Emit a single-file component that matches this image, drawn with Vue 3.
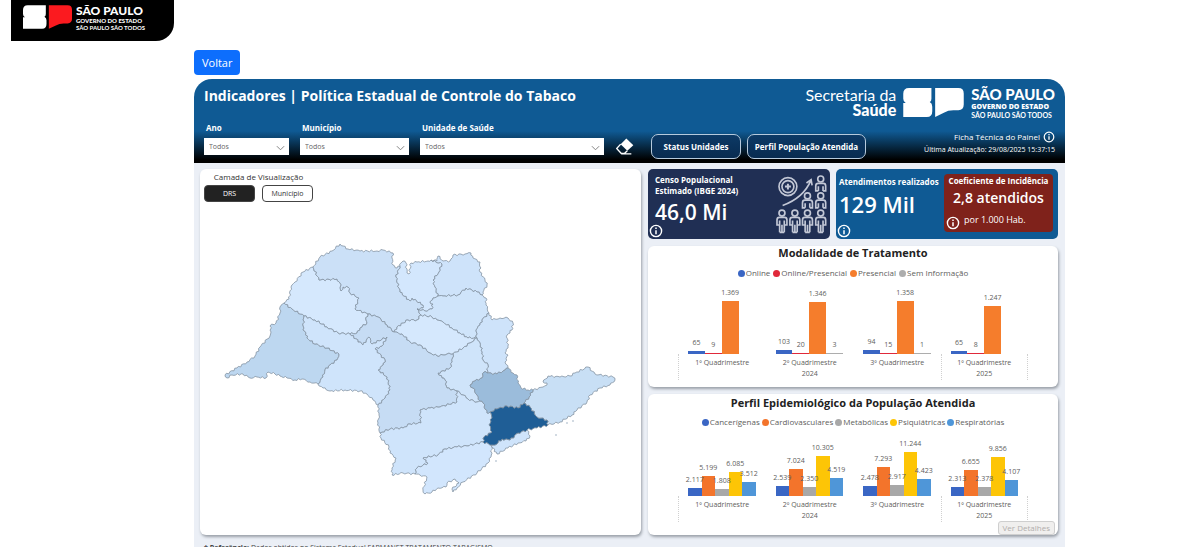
<script setup>
import { ref } from 'vue'

const layer = ref('drs')

const filters = [
  { id: 'ano', label: 'Ano', size: 'small' },
  { id: 'municipio', label: 'Município', size: 'medium' },
  { id: 'unidade', label: 'Unidade de Saúde', size: 'large' }
]

const periods = [
  { label: '1º Quadrimestre', year: '' },
  { label: '2º Quadrimestre', year: '2024' },
  { label: '3º Quadrimestre', year: '' },
  { label: '1º Quadrimestre', year: '2025' }
]

const charts = [
  {
    id: 'modalidade',
    title: 'Modalidade de Tratamento',
    peak: 53,
    max: 1369,
    series: [
      { name: 'Online', color: '#3a66c4' },
      { name: 'Online/Presencial', color: '#e0293a' },
      { name: 'Presencial', color: '#f57d2c' },
      { name: 'Sem Informação', color: '#adadad' }
    ],
    values: [
      [65, 9, 1369, null],
      [103, 20, 1346, 3],
      [94, 15, 1358, 1],
      [65, 8, 1247, null]
    ]
  },
  {
    id: 'perfil',
    title: 'Perfil Epidemiológico da População Atendida',
    peak: 44,
    max: 11244,
    series: [
      { name: 'Cancerígenas', color: '#3a66c4' },
      { name: 'Cardiovasculares', color: '#f3742b' },
      { name: 'Metabólicas', color: '#a8a8a8' },
      { name: 'Psiquiátricas', color: '#fdc506' },
      { name: 'Respiratórias', color: '#4f96d8' }
    ],
    values: [
      [2117, 5199, 1808, 6085, 3512],
      [2539, 7024, 2350, 10305, 4519],
      [2478, 7293, 2917, 11244, 4423],
      [2313, 6655, 2378, 9856, 4107]
    ]
  }
]

const format = (n) => String(n).replace(/\B(?=(\d{3})+$)/g, '.')
const barHeight = (chart, v) => Math.max(1, Math.round((v / chart.max) * chart.peak)) + 'px'

const arcs = {
  prudenteOut: '318,384 310,382 302,379 295,380 287,378 280,376 275,374 268,372 266,378 257,377 250,378 243,374 232,375 227,378 225,375 237,368 247,362 255,356 260,347 270,336 271,332 270,326 276,323 280,313 280,307 284,303',
  aracatubaOut: '284,303 289,299 291,287 295,282 303,272 313,267',
  rioPretoOut: '313,267 320,257 332,251 340,244 348,249 360,251 377,251 383,250 393,253 392,258 393,265 397,268 400,266',
  barretosOut: '400,266 401,263 403,261 406,263 407,273 409,274 411,263 417,262 428,261 431,260',
  francaOut: '431,260 437,261 438,256 443,261 450,261 453,255 465,254 471,253 473,258 480,262 480,272 485,280 487,285 483,292 482,295',
  barretosFranca: '431,260 442,264 439,272 433,280 435,287 438,296',
  barretosRibeirao: '438,296 433,298 430,302 433,304 432,309 425,311 417,309',
  barretosRioPreto: '400,266 396,277 400,292 410,301 412,298 423,305 423,308 417,309',
  ribeiraoRioPreto: '417,309 419,313 421,315',
  francaRibeirao: '438,296 443,296 458,295 466,288 477,292 482,295',
  ribeiraoOut: '482,295 486,298 486,305 489,313',
  saoJoaoOut: '489,313 492,320 500,318 508,318 513,323 512,330 507,335 508,348 505,353 508,355 505,362 508,368',
  ribeiraoSaoJoao: '489,313 482,320 480,325 476,330 477,338',
  ribeiraoAraraquara: '421,315 432,317 437,320 443,322 452,328 460,333 468,338 477,338',
  araraquaraRioPreto: '421,315 417,320 408,320 397,327 394,332',
  araraquaraBauru: '394,332 402,334 410,342 420,345 430,353 437,356 447,354 453,354',
  araraquaraPiracicaba: '453,354 463,348 470,343 477,338',
  saoJoaoPiracicaba: '477,338 480,343 482,352 483,360 488,365 487,373',
  saoJoaoCampinas: '487,373 497,374 505,370 508,368',
  piracicabaBauru: '453,354 452,362 450,368 438,373 442,378 445,380 447,388 457,391',
  piracicabaSorocaba: '457,391 463,395 468,399 477,402 480,401',
  piracicabaCampinas: '480,401 477,395 473,388 470,385 475,381 482,378 484,372 487,373',
  campinasOut: '508,368 513,373 517,375 518,383 521,388 528,390 533,390',
  campinasTaubate: '533,390 529,397 524,403',
  campinasCapital: '524,403 518,408 507,406 497,409 490,412',
  campinasSorocaba: '480,401 483,403 487,413 490,412',
  taubateOut: '533,390 543,387 547,385 547,383 543,382 548,376 560,377 570,376 575,373 588,367 595,374 613,377 615,380 610,385 600,388 590,395 587,402 577,410 572,415 560,422 548,425',
  taubateCapital: '524,403 530,407 537,417 547,420 548,425',
  capitalOut: '548,425 537,428 527,430',
  capitalSantos: '527,430 518,433 510,440 502,439 495,445 492,445',
  capitalSorocaba: '490,412 492,418 489,425 492,432 484,437 483,442',
  capitalRegistro: '483,442 492,445',
  santosOut: '527,430 530,436 526,441 518,443 508,448 497,454 493,448 492,445',
  registroOut: '492,445 491,457 488,463 477,473 463,482 457,488 453,492 452,489 459,483 455,479 447,483 446,487 438,488 432,492 425,494 423,490 427,477 420,475 415,474',
  registroSorocaba: '415,474 417,468 428,463 423,458 438,455 445,449 457,447 467,446 483,442',
  sorocabaOut: '415,474 403,473 392,475 392,468 396,458 390,453 389,447 381,438 380,433',
  sorocabaBauru: '380,433 390,429 403,428 410,424 421,423 420,410 430,408 440,407 457,402 457,391',
  aracatubaBauru: '368,314 366,320 367,323 360,328 357,333 350,334',
  bauruMarilia: '350,334 363,345 369,337 372,344 387,337 382,346 375,349 385,360 383,365 378,370 387,377 390,390 385,398 378,405',
  bauruOut: '378,405 379,415 378,423 380,433',
  mariliaOut: '318,384 323,388 330,391 345,390 360,391 367,394 373,400 378,405',
  prudenteMarilia: '318,384 323,377 325,370 330,365 337,360 339,354 327,348 315,344 307,338 306,333 303,330 304,316',
  prudenteAracatuba: '284,303 292,309 304,316',
  mariliaAracatuba: '304,316 315,320 327,327 338,333 350,334',
  aracatubaRioPreto: '313,267 319,280 337,279 340,283 341,291 343,287 348,287 350,293 359,298 355,309 368,314',
  rioPretoBauru: '368,314 378,317 387,325 394,332'
}

/* Breaks long border segments into short ones with a slight alternating sway. */
const detail = (text) => {
  const pts = text.split(' ').map((p) => p.split(',').map(Number))
  const out = [pts[0]]
  for (let i = 1; i < pts.length; i++) {
    const [ax, ay] = pts[i - 1]
    const [bx, by] = pts[i]
    const len = Math.hypot(bx - ax, by - ay)
    const steps = Math.max(1, Math.round(len / 2))
    for (let s = 1; s < steps; s++) {
      const t = s / steps
      const sway = Math.sin(ax * 3.1 + ay * 1.7 + s * 2.3)
      out.push([ax + (bx - ax) * t - ((by - ay) / len) * sway, ay + (by - ay) * t + ((bx - ax) / len) * sway])
    }
    out.push([bx, by])
  }
  return out
}

const ring = (names) => {
  const pts = names.flatMap((n) => (n[0] === '-' ? detail(arcs[n.slice(1)]).reverse() : detail(arcs[n])))
  return 'M' + pts.map((p) => p[0].toFixed(1) + ' ' + p[1].toFixed(1)).join('L') + 'Z'
}

const regions = [
  { name: 'Presidente Prudente', fill: '#bdd7f0', arcs: ['prudenteOut', 'prudenteAracatuba', '-prudenteMarilia'] },
  { name: 'Araçatuba', fill: '#d5e8fd', arcs: ['aracatubaOut', 'aracatubaRioPreto', 'aracatubaBauru', '-mariliaAracatuba', '-prudenteAracatuba'] },
  { name: 'São José do Rio Preto', fill: '#cbe0f7', arcs: ['rioPretoOut', 'barretosRioPreto', 'ribeiraoRioPreto', 'araraquaraRioPreto', '-rioPretoBauru', '-aracatubaRioPreto'] },
  { name: 'Barretos', fill: '#d3e7fd', arcs: ['barretosOut', 'barretosFranca', 'barretosRibeirao', '-barretosRioPreto'] },
  { name: 'Franca', fill: '#cee3fa', arcs: ['francaOut', '-francaRibeirao', '-barretosFranca'] },
  { name: 'Ribeirão Preto', fill: '#cfe4fa', arcs: ['francaRibeirao', 'ribeiraoOut', 'ribeiraoSaoJoao', '-ribeiraoAraraquara', '-ribeiraoRioPreto', '-barretosRibeirao'] },
  { name: 'São João da Boa Vista', fill: '#cee3fa', arcs: ['saoJoaoOut', '-saoJoaoCampinas', '-saoJoaoPiracicaba', '-ribeiraoSaoJoao'] },
  { name: 'Araraquara', fill: '#d5e8fd', arcs: ['ribeiraoAraraquara', '-araraquaraPiracicaba', '-araraquaraBauru', '-araraquaraRioPreto'] },
  { name: 'Piracicaba', fill: '#cfe4fa', arcs: ['araraquaraPiracicaba', 'saoJoaoPiracicaba', '-piracicabaCampinas', '-piracicabaSorocaba', '-piracicabaBauru'] },
  { name: 'Bauru', fill: '#c6dcf4', arcs: ['rioPretoBauru', 'araraquaraBauru', 'piracicabaBauru', '-sorocabaBauru', '-bauruOut', '-bauruMarilia', '-aracatubaBauru'] },
  { name: 'Marília', fill: '#cfe4fb', arcs: ['mariliaAracatuba', 'bauruMarilia', '-mariliaOut', 'prudenteMarilia'] },
  { name: 'Sorocaba', fill: '#cfe4fb', arcs: ['sorocabaBauru', 'piracicabaSorocaba', 'campinasSorocaba', 'capitalSorocaba', '-registroSorocaba', 'sorocabaOut'] },
  { name: 'Registro', fill: '#d2e6fd', arcs: ['registroSorocaba', 'capitalRegistro', 'registroOut'] },
  { name: 'Baixada Santista', fill: '#cfe4fb', arcs: ['capitalSantos', '-santosOut'] },
  { name: 'Taubaté', fill: '#c8dff5', arcs: ['taubateOut', '-taubateCapital', '-campinasTaubate'] },
  { name: 'Campinas', fill: '#9bbcdb', arcs: ['saoJoaoCampinas', 'campinasOut', 'campinasTaubate', 'campinasCapital', '-campinasSorocaba', 'piracicabaCampinas'] },
  { name: 'Grande São Paulo', fill: '#1f5e96', arcs: ['taubateCapital', 'capitalOut', 'capitalSantos', '-capitalRegistro', '-capitalSorocaba', '-campinasCapital'] }
].map((r) => ({ ...r, d: ring(r.arcs) }))

const crowd = [
  [135, 0, 2], [95, 51, 2], [135, 51, 2],
  [18, 103, 1], [57, 103, 1], [95, 103, 1], [135, 103, 1]
]
</script>

<template>
  <div class="page">
    <svg width="0" height="0" class="defs" aria-hidden="true">
      <symbol id="sp-mark" viewBox="0 0 146 70">
        <path class="mark-s" d="M14 0H68V26Q68 33 64 34Q70 37 70 45V56Q70 70 57 70H0V36H6Q0 33 0 26V14Q0 0 14 0Z" />
        <path class="mark-p" d="M77 0H133Q146 0 146 13V40Q146 53 133 54H121Q108 54 98 60L77 70Z" />
      </symbol>
      <symbol id="info" viewBox="0 0 14 14">
        <circle cx="7" cy="7" r="5.6" fill="none" stroke="currentColor" stroke-width="1.4" />
        <path d="M7 6.2V10.2M7 3.6V5" stroke="currentColor" stroke-width="1.5" />
      </symbol>
    </svg>

    <a class="gov" href="#" aria-label="São Paulo Governo do Estado">
      <svg class="gov-mark"><use href="#sp-mark" /></svg>
      <span class="gov-text">
        <strong>SÃO PAULO</strong>
        <b>GOVERNO DO ESTADO</b>
        <span>SÃO PAULO SÃO TODOS</span>
      </span>
    </a>

    <main class="content">
      <button class="back" type="button">Voltar</button>

      <section class="dashboard">
        <header class="hero">
          <div class="hero-top">
            <h1>Indicadores | Política Estadual de Controle do Tabaco</h1>
            <div class="brand">
              <span class="dept">Secretaria da<b>Saúde</b></span>
              <svg class="brand-mark"><use href="#sp-mark" /></svg>
              <span class="brand-text">
                <strong>SÃO PAULO</strong>
                <b>GOVERNO DO ESTADO</b>
                <span>SÃO PAULO SÃO TODOS</span>
              </span>
            </div>
          </div>
          <div class="hero-bottom">
            <div v-for="f in filters" :key="f.id" class="filter" :class="f.size">
              <label :for="f.id">{{ f.label }}</label>
              <div class="select-box">
                <select :id="f.id"><option>Todos</option></select>
                <svg class="chevron" viewBox="0 0 10 6"><path d="M1 1L5 5L9 1" /></svg>
              </div>
            </div>
            <button class="eraser" type="button" aria-label="Limpar filtros">
              <svg viewBox="0 0 54 50">
                <path d="M31 1L52 21L34 38L14 18Z" fill="#fff" />
                <path d="M14 18L2 31L16 46H25L34 38M16 47H46" fill="none" stroke="#fff" stroke-width="4" />
              </svg>
            </button>
            <button class="nav status" type="button">Status Unidades</button>
            <button class="nav profile" type="button">Perfil População Atendida</button>
            <div class="meta">
              <a href="#">Ficha Técnica do Painel <svg><use href="#info" /></svg></a>
              <span>Última Atualização: 29/08/2025 15:37:15</span>
            </div>
          </div>
        </header>

        <div class="body">
          <section class="card map-card">
            <div class="layers">
              <span class="layers-title">Camada de Visualização</span>
              <div class="layer-buttons">
                <button type="button" :class="{ active: layer === 'drs' }" @click="layer = 'drs'">DRS</button>
                <button type="button" :class="{ active: layer === 'mun' }" @click="layer = 'mun'">Município</button>
              </div>
            </div>
            <svg class="map" viewBox="200 235 441 265" role="img" aria-label="Mapa do Estado de São Paulo">
              <path v-for="r in regions" :key="r.name" :d="r.d" :fill="r.fill" class="region" />
              <g fill="#c3ced8">
                <circle cx="567" cy="423" r="1" /><circle cx="573" cy="421" r="1" />
                <circle cx="556" cy="435" r="1" /><circle cx="496" cy="461" r="1" />
              </g>
            </svg>
          </section>

          <div class="side">
            <div class="kpis">
              <article class="kpi census">
                <h2>Censo Populacional<br />Estimado (IBGE 2024)</h2>
                <p class="figure">46,0 Mi</p>
                <svg class="info"><use href="#info" /></svg>
                <svg class="crowd" viewBox="0 -2 154 178" fill="none" stroke="#c3c8d6" stroke-width="5">
                  <circle cx="36" cy="33" r="27" />
                  <circle cx="36" cy="33" r="18" />
                  <path d="M36 24V42M27 33H45" stroke-width="6" />
                  <path d="M20 90Q83 67 105 15M92 22L106 12L109 29" />
                  <g v-for="(p, i) in crowd" :key="i" :transform="`translate(${p[0]} ${p[1]})`">
                    <circle cx="0" cy="10" r="9" />
                    <path v-if="p[2] === 1" d="M-7 68H7M-7 68V32M7 68V32M0 45V68M-7 46H-15V31Q-15 23 -8 23H8Q15 23 15 31V46H7" />
                    <path v-else d="M-7 46V32M7 46V32M-7 46H-15V31Q-15 23 -8 23H8Q15 23 15 31V46H7" />
                  </g>
                </svg>
              </article>
              <article class="kpi visits">
                <div class="visits-main">
                  <h2>Atendimentos realizados</h2>
                  <p class="figure">129 Mil</p>
                </div>
                <svg class="info"><use href="#info" /></svg>
                <div class="rate">
                  <h2>Coeficiente de Incidência</h2>
                  <p class="rate-figure">2,8 atendidos</p>
                  <p class="rate-note"><svg><use href="#info" /></svg>por 1.000 Hab.</p>
                </div>
              </article>
            </div>

            <section v-for="c in charts" :key="c.id" class="card chart" :class="c.id">
              <h2>{{ c.title }}</h2>
              <ul class="legend">
                <li v-for="s in c.series" :key="s.name"><i :style="{ background: s.color }"></i>{{ s.name }}</li>
              </ul>
              <div class="plot">
                <div v-for="(p, i) in periods" :key="i" class="period">
                  <div class="bars">
                    <div v-for="(s, k) in c.series" :key="s.name" class="slot">
                      <template v-if="c.values[i][k] !== null">
                        <span>{{ format(c.values[i][k]) }}</span>
                        <div class="bar" :style="{ height: barHeight(c, c.values[i][k]), background: s.color }"></div>
                      </template>
                    </div>
                  </div>
                  <div class="axis">{{ p.label }}<br />{{ p.year }}</div>
                </div>
              </div>
              <button v-if="c.id === 'perfil'" class="details" type="button" disabled>Ver Detalhes</button>
            </section>
          </div>
        </div>
        <p class="source"><b>* Referência:</b> Dados obtidos no Sistema Estadual FARMANET TRATAMENTO TABAGISMO</p>
      </section>
    </main>
  </div>
</template>

<style>
body { margin: 0; background: #fff; }
</style>

<style scoped>
* { box-sizing: border-box; }
.page { height: 100vh; overflow: hidden; font-family: "Open Sans", "Noto Sans", sans-serif; color: #333; }
.defs { position: absolute; }
h1, h2, p, ul { margin: 0; padding: 0; }
button { font-family: inherit; cursor: pointer; }

.gov { display: flex; width: 163px; height: 41px; margin-left: 11px; padding: 4px 12px; gap: 4px; background: #000; border-radius: 0 0 18px 0; color: #fff; text-decoration: none; }
.gov-mark { width: 49px; height: 24px; margin-top: 1px; fill: #fff; --accent: #fb1a1f; }
.mark-p { fill: var(--accent, #fff); }
.gov-text, .brand-text { display: flex; flex-direction: column; font-family: Lato, sans-serif; white-space: nowrap; }
.gov-text strong { font-size: 12px; line-height: 13px; font-weight: 900; }
.gov-text b { font-size: 6px; line-height: 7px; font-weight: 900; }
.gov-text span { font-size: 6px; line-height: 7px; font-weight: 700; }

.content { padding: 9px 135px 0 194px; }
.back { display: block; height: 25px; padding: 0 8px; margin-bottom: 4px; border: 0; border-radius: 4px; background: #0d6efd; color: #fff; font-size: 11px; }
.dashboard { background: #ebeff6; border-radius: 20px 20px 0 0; height: 500px; }

.hero { display: flex; flex-direction: column; justify-content: space-between; height: 84px; padding: 8px 10px 4px; border-radius: 18px 18px 0 0; background: linear-gradient(#0f5a94 0 62%, #000 96%); color: #fff; }
.hero-top { display: flex; justify-content: space-between; height: 32px; }
h1 { font-size: 14px; line-height: 18px; font-weight: 700; white-space: nowrap; }
.brand { display: flex; gap: 7px; }
.dept { font-family: Lato, sans-serif; font-size: 16px; line-height: 15px; text-align: right; }
.dept b { display: block; font-weight: 900; }
.brand-mark { width: 61px; height: 29px; margin-top: 1px; fill: #fff; }
.brand-text strong { font-size: 15px; line-height: 15px; font-weight: 900; }
.brand-text b { font-family: "Open Sans", sans-serif; font-size: 7px; line-height: 9px; font-weight: 800; }
.brand-text span { font-size: 7px; line-height: 8px; font-weight: 700; }

.hero-bottom { display: flex; align-items: flex-end; }
.filter { display: flex; flex-direction: column; gap: 4px; margin-right: 11px; padding-bottom: 4px; }
.filter.small { width: 85px; }
.filter.medium { width: 109px; }
.filter.large { width: 184px; }
.filter label { padding-left: 2px; font-size: 8px; line-height: 13px; font-weight: 700; }
.select-box { position: relative; }
select { display: block; width: 100%; height: 17px; padding: 0 5px; border: 0; border-radius: 0; appearance: none; background: #fff; color: #666; font-family: inherit; font-size: 7px; }
.chevron { position: absolute; right: 4px; top: 7px; width: 9px; height: 6px; fill: none; stroke: #777; pointer-events: none; }
.eraser { width: 18px; height: 18px; margin: 0 17px 4px 1px; padding: 0; border: 0; background: none; }
.eraser svg { display: block; width: 18px; height: 17px; }
.nav { height: 25px; padding: 0; border: 1px solid #b6cadd; border-radius: 7px; background: linear-gradient(#0d3a66, #082b50); color: #fff; font-size: 8px; font-weight: 700; white-space: nowrap; }
.status { width: 90px; margin-right: 6px; }
.profile { width: 119px; }
.meta { display: flex; flex-direction: column; align-items: flex-end; margin-left: auto; padding-bottom: 3px; font-size: 7px; line-height: 13px; white-space: nowrap; }
.meta a { display: flex; align-items: center; gap: 3px; color: #fff; font-size: 8px; text-decoration: none; }
.meta svg { width: 12px; height: 12px; }

.body { display: grid; grid-template-columns: minmax(0, 441fr) minmax(0, 410fr); gap: 7px; padding: 6px 7px 0 6px; }
.card { position: relative; background: #fff; border-radius: 6px; box-shadow: 1px 2px 3px #9aa0a8; }
.map-card { display: flex; flex-direction: column; }
.layers { display: flex; flex-direction: column; align-self: flex-start; gap: 1px; padding: 0 4px; }
.layers-title { text-align: center; font-size: 8px; line-height: 15px; }
.layer-buttons { display: flex; gap: 7px; }
.layer-buttons button { width: 51px; height: 17px; padding: 0; border: 1px solid #444; border-radius: 4px; background: #fff; color: #333; font-size: 7px; }
.layer-buttons .active { background: #222; color: #fff; }
.map { display: block; width: 100%; margin-top: 33px; }
.region { stroke: #8594a3; stroke-width: 0.8; stroke-linejoin: round; }

.side { display: flex; flex-direction: column; gap: 7px; min-width: 0; }
.kpis { display: grid; grid-template-columns: 182fr 222fr; gap: 6px; height: 70px; }
.kpi { position: relative; border-radius: 5px; color: #fff; }
.kpi h2 { font-size: 8px; line-height: 11px; font-weight: 700; white-space: nowrap; }
.figure { font-size: 21px; line-height: 26px; font-weight: 600; }
.census { padding: 5px 7px; background: #202f54; }
.census .figure { margin-top: 3px; }
.info { position: absolute; left: 1px; bottom: 1px; width: 14px; height: 14px; }
.crowd { position: absolute; right: 3px; top: 6px; width: 51px; height: 59px; }
.visits { display: flex; justify-content: space-between; padding: 5px 5px 7px 3px; background: #0f5a94; }
.visits-main h2 { padding-top: 2px; }
.visits-main .figure { margin-top: 4px; font-size: 22px; }
.rate { width: 109px; border-radius: 4px; background: #7f221b; text-align: center; }
.rate h2 { line-height: 14px; }
.rate-figure { font-size: 14px; line-height: 20px; font-weight: 600; }
.rate-note { display: flex; gap: 4px; padding: 4px 2px 0; font-size: 9px; line-height: 16px; }
.rate-note svg { width: 14px; height: 14px; margin-top: 4px; }

.chart { height: 141px; }
.chart h2 { font-size: 11px; line-height: 14px; font-weight: 700; text-align: center; color: #222; }
.perfil h2 { padding-top: 2px; }
.legend { display: flex; justify-content: center; gap: 3px; margin-top: 6px; list-style: none; font-size: 8px; line-height: 14px; color: #605e5c; }
.perfil .legend { gap: 2px; margin-top: 5px; }
.legend li { display: flex; align-items: center; gap: 1px; }
.legend i { width: 7px; height: 7px; border-radius: 50%; }
.plot { display: grid; grid-template-columns: repeat(4, minmax(0, 1fr)); margin: 0 30px; }
.bars { display: flex; align-items: flex-end; height: 74px; padding: 0 10px; }
.perfil .bars { height: 67px; }
.slot { position: relative; flex: 1; display: flex; flex-direction: column; align-items: center; min-width: 0; font-size: 7px; line-height: 9px; color: #605e5c; }
.slot span { position: relative; z-index: 1; margin-bottom: 4px; white-space: nowrap; }
.bar { width: 100%; }
.axis { height: 26px; padding-top: 3px; font-size: 7px; line-height: 11px; text-align: center; color: #605e5c; white-space: nowrap; border-left: 1px dotted transparent; }
.period:first-child .axis, .period:last-child .axis { border-left-color: #d0d0d0; }
.period:last-child .axis { border-right: 1px dotted #d0d0d0; }
.details { position: absolute; right: 3px; bottom: 0; height: 14px; padding: 0 4px; border: 1px solid #cfcfcf; border-radius: 3px; background: #f0efee; color: #b0aeac; font-size: 8px; line-height: 12px; }
.source { padding: 8px 10px; font-size: 7px; line-height: 10px; color: #444; }
</style>
